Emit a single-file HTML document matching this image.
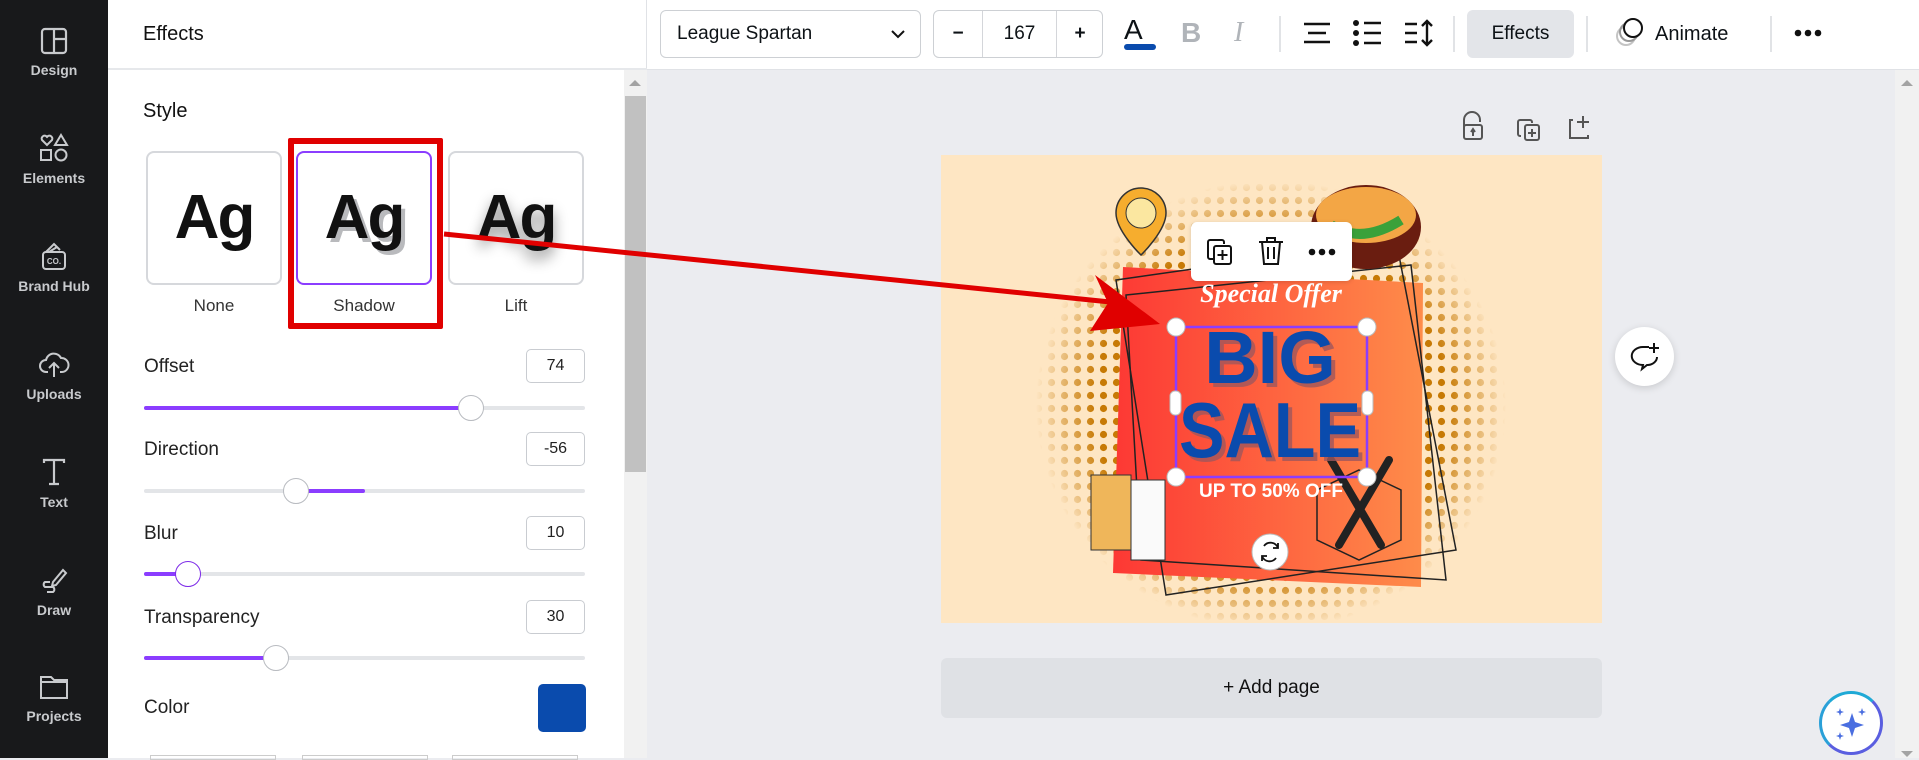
<!DOCTYPE html>
<html><head><meta charset="utf-8"><style>
*{box-sizing:border-box;margin:0;padding:0}
body{width:1919px;height:758px;overflow:hidden;font-family:"Liberation Sans",sans-serif;background:#ebecf0;position:relative;color:#0d1216}
.abs{position:absolute}
.side{left:0;top:0;width:108px;height:758px;background:#18191b}
.si{position:absolute;left:0;width:108px;text-align:center;color:#c8cacd;font-size:14px;font-weight:bold}
.si svg{display:block;margin:0 auto 6px}
.panel{left:108px;top:0;width:539px;height:758px;background:#fff;border-right:1px solid #e0e2e6}
.lbl{position:absolute;font-size:19px;color:#222}
.inp{position:absolute;left:526px;width:59px;height:34px;border:1px solid #c9ccd1;border-radius:5px;text-align:center;line-height:32px;font-size:16px;color:#222}
.track{position:absolute;left:144px;width:441px;height:4px;background:#e3e5e8;border-radius:2px}
.fill{position:absolute;height:4px;background:#8b3dff;border-radius:2px}
.thumb{position:absolute;width:26px;height:26px;border-radius:50%;background:#fff;border:1.5px solid #b8bbc0;margin:-13px 0 0 -13px}
.card{position:absolute;top:151px;width:136px;height:134px;border:2px solid #d6d8dc;border-radius:8px;background:#fff;text-align:center;font-weight:bold;font-size:62px;line-height:130px;color:#111;letter-spacing:-2px}
.cl{position:absolute;top:296px;font-size:17px;color:#333;width:136px;text-align:center}
.top{left:647px;top:0;width:1272px;height:70px;background:#fff;border-bottom:1px solid #e0e2e6}
.div{position:absolute;top:16px;width:2px;height:36px;background:#e1e3e6}
</style></head><body>

<div class="abs side">
 <div class="si" style="top:26px"><svg width="30" height="30" viewBox="0 0 30 30" fill="none" stroke="#c8cacd" stroke-width="2.2"><rect x="3" y="3" width="24" height="24" rx="3"/><path d="M15 3v24M15 13h12"/></svg>Design</div>
 <div class="si" style="top:132px"><svg width="32" height="32" viewBox="0 0 32 32" fill="none" stroke="#c8cacd" stroke-width="2"><path d="M9 13l-5-5a3 3 0 014-4l1 1 1-1a3 3 0 014 4z"/><path d="M23 3l6 10h-12z"/><rect x="3" y="18" width="10" height="10"/><circle cx="23" cy="23" r="5.5"/></svg>Elements</div>
 <div class="si" style="top:240px"><svg width="30" height="32" viewBox="0 0 30 32" fill="none" stroke="#c8cacd" stroke-width="2"><path d="M7 12l8-8 6 6M10 12l8-5"/><rect x="4" y="12" width="22" height="17" rx="3"/><text x="15" y="24" font-size="8" fill="#c8cacd" stroke="none" text-anchor="middle" font-family="Liberation Sans">CO.</text></svg>Brand Hub</div>
 <div class="si" style="top:348px"><svg width="32" height="32" viewBox="0 0 32 32" fill="none" stroke="#c8cacd" stroke-width="2"><path d="M10 24H8a6 6 0 010-12 8 8 0 0115-2 6 6 0 011 14h-2"/><path d="M16 29V16M11 20l5-5 5 5"/></svg>Uploads</div>
 <div class="si" style="top:456px"><svg width="30" height="32" viewBox="0 0 30 32" fill="none" stroke="#c8cacd" stroke-width="2.2"><path d="M5 7V4h20v3M15 4v24M10 28h10"/></svg>Text</div>
 <div class="si" style="top:564px"><svg width="30" height="32" viewBox="0 0 30 32" fill="none" stroke="#c8cacd" stroke-width="2"><path d="M14 18l10-12 3 3-10 12-4 1z"/><path d="M11 18H6a3 3 0 000 5h8a3 3 0 010 5H8"/></svg>Draw</div>
 <div class="si" style="top:672px"><svg width="32" height="30" viewBox="0 0 32 30" fill="none" stroke="#c8cacd" stroke-width="2"><path d="M3 5h10l3 3h13v18H3z M3 10h26"/></svg>Projects</div>
</div>

<div class="abs panel">
 <div style="position:absolute;left:0;top:0;width:539px;height:70px;border-bottom:2px solid #e6e8eb"></div>
 <div class="lbl" style="left:35px;top:23px;font-size:20px;color:#111">Effects</div>
 <div class="abs" style="left:516px;top:70px;width:23px;height:688px;background:#f1f1f1"></div>
 <div class="abs" style="left:517px;top:96px;width:21px;height:376px;background:#c1c1c1"></div>
 <div class="abs" style="left:521px;top:80px;width:0;height:0;border-left:6px solid transparent;border-right:6px solid transparent;border-bottom:6px solid #a3a3a3"></div>
 <div class="lbl" style="left:35px;top:100px;font-size:20px;color:#111">Style</div>
</div>
<div class="card" style="left:146px">Ag</div>
<div class="card" style="left:296px;border:2px solid #8b3dff;text-shadow:4px 4px 0 #b9babd">Ag</div>
<div class="card" style="left:448px;text-shadow:0 8px 14px rgba(0,0,0,.45)">Ag</div>
<div class="cl" style="left:146px">None</div>
<div class="cl" style="left:296px">Shadow</div>
<div class="cl" style="left:448px">Lift</div>
<div class="abs" style="left:288px;top:138px;width:155px;height:191px;border:6px solid #e00000;border-radius:2px"></div>

<div class="lbl" style="left:144px;top:356px">Offset</div><div class="inp" style="top:349px">74</div>
<div class="track" style="top:406px"><div class="fill" style="left:0;width:326px"></div></div><div class="thumb" style="left:471px;top:408px"></div>
<div class="lbl" style="left:144px;top:439px">Direction</div><div class="inp" style="top:432px">-56</div>
<div class="track" style="top:489px"><div class="fill" style="left:151px;width:70px"></div></div><div class="thumb" style="left:296px;top:491px"></div>
<div class="lbl" style="left:144px;top:523px">Blur</div><div class="inp" style="top:516px">10</div>
<div class="track" style="top:572px"><div class="fill" style="left:0;width:44px"></div></div><div class="thumb" style="left:188px;top:574px;border-color:#7d2ae8"></div>
<div class="lbl" style="left:144px;top:607px">Transparency</div><div class="inp" style="top:600px">30</div>
<div class="track" style="top:656px"><div class="fill" style="left:0;width:132px"></div></div><div class="thumb" style="left:276px;top:658px"></div>
<div class="lbl" style="left:144px;top:697px">Color</div>
<div class="abs" style="left:538px;top:684px;width:48px;height:48px;background:#0a4bad;border-radius:5px"></div>
<div class="abs" style="left:150px;top:755px;width:126px;height:5px;border:1px solid #ccc"></div>
<div class="abs" style="left:302px;top:755px;width:126px;height:5px;border:1px solid #ccc"></div>
<div class="abs" style="left:452px;top:755px;width:126px;height:5px;border:1px solid #ccc"></div>

<div class="abs top">
 <div class="abs" style="left:13px;top:10px;width:261px;height:48px;border:1px solid #cdd0d4;border-radius:6px;font-size:19px;line-height:46px;padding-left:16px">League Spartan
  <svg class="abs" style="right:14px;top:17px" width="16" height="12" viewBox="0 0 16 12"><path d="M2 3l6 6 6-6" fill="none" stroke="#111" stroke-width="2"/></svg></div>
 <div class="abs" style="left:286px;top:10px;width:170px;height:48px;border:1px solid #cdd0d4;border-radius:6px;font-size:19px;line-height:46px">
  <span class="abs" style="left:0;width:48px;text-align:center;font-weight:bold">−</span>
  <div class="abs" style="left:48px;top:0;width:1px;height:46px;background:#d4d6da"></div>
  <span class="abs" style="left:49px;width:73px;text-align:center">167</span>
  <div class="abs" style="left:122px;top:0;width:1px;height:46px;background:#d4d6da"></div>
  <span class="abs" style="left:123px;width:46px;text-align:center;font-weight:bold">+</span></div>
 <div class="abs" style="left:477px;top:14px;font-size:28px;">A</div>
 <div class="abs" style="left:477px;top:44px;width:32px;height:6px;background:#0a4bad;border-radius:3px"></div>
 <div class="abs" style="left:534px;top:17px;font-size:28px;font-weight:bold;color:#b0b4b9">B</div>
 <div class="abs" style="left:587px;top:17px;font-size:28px;font-style:italic;color:#b0b4b9;font-family:'Liberation Serif'">I</div>
 <div class="div" style="left:632px"></div>
 <svg class="abs" style="left:655px;top:21px" width="30" height="24" viewBox="0 0 30 24" stroke="#111" stroke-width="2.4"><path d="M2 3h26M6 12h18M2 21h26"/></svg>
 <svg class="abs" style="left:705px;top:20px" width="30" height="26" viewBox="0 0 30 26"><g fill="#111"><circle cx="4" cy="3" r="3"/><circle cx="4" cy="13" r="3"/><circle cx="4" cy="23" r="3"/></g><path d="M12 3h17M12 13h17M12 23h17" stroke="#111" stroke-width="2.4"/></svg>
 <svg class="abs" style="left:756px;top:18px" width="32" height="30" viewBox="0 0 32 30" stroke="#111" stroke-width="2.4" fill="none"><path d="M2 6h12M2 15h12M2 24h12M24 3v24M19 8l5-5 5 5M19 22l5 5 5-5"/></svg>
 <div class="div" style="left:806px"></div>
 <div class="abs" style="left:820px;top:10px;width:107px;height:48px;background:#e3e5e9;border-radius:6px;font-size:19px;line-height:48px;text-align:center">Effects</div>
 <div class="div" style="left:939px"></div>
 <svg class="abs" style="left:967px;top:16px" width="34" height="34" viewBox="0 0 34 34" fill="none" stroke-width="2"><circle cx="12" cy="20" r="9" stroke="#c4c4c4"/><circle cx="15" cy="16" r="9" stroke="#999"/><circle cx="19" cy="12" r="9" stroke="#111" fill="#fff"/></svg>
 <div class="abs" style="left:1008px;top:23px;font-size:20px">Animate</div>
 <div class="div" style="left:1123px"></div>
 <svg class="abs" style="left:1147px;top:29px" width="28" height="8"><g fill="#111"><circle cx="4" cy="4" r="3.3"/><circle cx="14" cy="4" r="3.3"/><circle cx="24" cy="4" r="3.3"/></g></svg>
</div>

<div class="abs" style="left:1895px;top:70px;width:24px;height:688px;background:#f1f1f1"></div>
<div class="abs" style="left:1901px;top:80px;border-left:6px solid transparent;border-right:6px solid transparent;border-bottom:6px solid #a3a3a3"></div>
<div class="abs" style="left:1901px;top:751px;border-left:6px solid transparent;border-right:6px solid transparent;border-top:6px solid #a3a3a3"></div>

<svg class="abs" style="left:1460px;top:110px" width="140" height="32" viewBox="0 0 140 32" fill="none" stroke="#555" stroke-width="2"><path d="M4 18V10a8 8 0 0116 0v2"/><rect x="4" y="15" width="18" height="14" rx="2"/><path d="M13 26v-6M11 22l2-3 2 3"/><rect x="65" y="15" width="14" height="15" rx="2"/><path d="M61 26h-1a2 2 0 01-2-2V12a2 2 0 012-2h10a2 2 0 012 2v1M72 19v8M68 23h8"/><path d="M113 10h-3v18h18v-3M123 6v12M117 12h12"/></svg>

<div class="abs" style="left:941px;top:155px;width:661px;height:468px;background:#fee6c3;overflow:hidden">
<svg width="661" height="468" viewBox="0 0 661 468">
 <defs>
  <pattern id="dp" width="13" height="13" patternUnits="userSpaceOnUse"><circle cx="6.5" cy="6.5" r="3.6" fill="#c77a05"/></pattern>
  <radialGradient id="rg"><stop offset="0.75" stop-color="#fff"/><stop offset="1" stop-color="#000"/></radialGradient>
  <mask id="mk"><ellipse cx="330" cy="250" rx="235" ry="225" fill="url(#rg)"/></mask>
  <linearGradient id="og" x1="0" x2="1"><stop offset="0" stop-color="#fd3834"/><stop offset="1" stop-color="#fe8c4a"/></linearGradient>
 </defs>
 <rect width="661" height="468" fill="url(#dp)" mask="url(#mk)"/>
 <polygon points="182,112 482,128 480,432 172,418" fill="url(#og)"/>
 <g fill="none" stroke="#222" stroke-width="1.5">
  <polygon points="175,125 455,85 515,395 225,440"/>
  <polygon points="185,140 470,110 505,425 200,405"/>
 </g>
 <path d="M175 58a25 25 0 0150 0c0 18-25 42-25 42s-25-24-25-42z" fill="#f6ad2e" stroke="#333" stroke-width="1.5"/>
 <circle cx="200" cy="58" r="15" fill="#fbe7a0" stroke="#333"/>
 <ellipse cx="425" cy="72" rx="55" ry="42" fill="#6a1d10"/>
 <ellipse cx="425" cy="60" rx="50" ry="28" fill="#f3a645"/>
 <path d="M390 70q30 20 70-5" stroke="#3aa13a" stroke-width="10" fill="none"/>
 <rect x="150" y="320" width="40" height="75" fill="#efb65a" stroke="#333"/>
 <rect x="190" y="325" width="34" height="80" fill="#fafafa" stroke="#333"/>
 <polygon points="418,315 460,335 460,385 418,405 376,385 376,335" fill="none" stroke="#222" stroke-width="1.5"/>
 <path d="M390 305l50 85M448 305l-50 85" stroke="#222" stroke-width="8" stroke-linecap="round"/>
 <text x="330" y="147" font-family="Liberation Serif" font-style="italic" font-weight="bold" font-size="26" fill="#fff" text-anchor="middle">Special Offer</text>
 <g font-family="Liberation Sans" font-weight="bold" text-anchor="middle">
  <text x="333" y="232" font-size="74" fill="#a0575c" opacity=".8">BIG</text>
  <text x="329" y="228" font-size="74" fill="#0a4bad">BIG</text>
  <text x="333" y="306" font-size="78" fill="#a0575c" opacity=".8" textLength="182" lengthAdjust="spacingAndGlyphs">SALE</text>
  <text x="329" y="302" font-size="78" fill="#0a4bad" textLength="182" lengthAdjust="spacingAndGlyphs">SALE</text>
  <text x="330" y="342" font-size="19" fill="#fff">UP TO 50% OFF</text>
 </g>
 <rect x="235" y="172" width="191" height="150" fill="none" stroke="#8b3dff" stroke-width="2.5"/>
 <g fill="#fff" stroke="#bbb"><circle cx="235" cy="172" r="9"/><circle cx="426" cy="172" r="9"/><circle cx="235" cy="322" r="9"/><circle cx="426" cy="322" r="9"/>
 <rect x="229" y="236" width="11" height="24" rx="5"/><rect x="421" y="236" width="11" height="24" rx="5"/>
 <circle cx="329" cy="397" r="18"/></g>
 <path d="M323 391a8 8 0 0114 2M335 403a8 8 0 01-14-2M337 388v5h-5M321 406v-5h5" fill="none" stroke="#111" stroke-width="1.8"/>
</svg>
</div>

<div class="abs" style="left:1191px;top:222px;width:161px;height:59px;background:#fff;border-radius:6px;box-shadow:0 1px 4px rgba(0,0,0,.15)">
 <svg class="abs" style="left:14px;top:15px" width="30" height="30" viewBox="0 0 30 30" fill="none" stroke="#111" stroke-width="2"><path d="M8 22H5a2 2 0 01-2-2V5a2 2 0 012-2h12a2 2 0 012 2v2"/><rect x="9" y="9" width="17" height="18" rx="2"/><path d="M17.5 13v10M12.5 18h10"/></svg>
 <svg class="abs" style="left:66px;top:13px" width="28" height="32" viewBox="0 0 28 32" fill="none" stroke="#111" stroke-width="2"><path d="M2 7h24M10 7V3h8v4M5 7l2 22h14l2-22M11 12v12M17 12v12"/></svg>
 <svg class="abs" style="left:117px;top:26px" width="30" height="8"><g fill="#111"><circle cx="4" cy="4" r="3.3"/><circle cx="14" cy="4" r="3.3"/><circle cx="24" cy="4" r="3.3"/></g></svg>
</div>

<svg class="abs" style="left:440px;top:225px" width="730" height="115" viewBox="0 0 730 115"><path d="M4 9L680 78" stroke="#e00000" stroke-width="5"/><polygon points="720,99 655,50 668,78 650,106" fill="#e00000"/></svg>

<div class="abs" style="left:941px;top:658px;width:661px;height:60px;background:#dfe1e5;border-radius:6px;text-align:center;line-height:60px;font-size:19px;color:#111">+ Add page</div>

<div class="abs" style="left:1615px;top:327px;width:59px;height:59px;border-radius:50%;background:#fff;box-shadow:0 2px 8px rgba(0,0,0,.15)">
 <svg class="abs" style="left:15px;top:14px" width="32" height="32" viewBox="0 0 32 32" fill="none" stroke="#111" stroke-width="2"><path d="M19 6h-6a10 8 0 000 18l-1 4 5-4h1a10 8 0 009-8"/><path d="M24 2v10M19 7h10"/></svg>
</div>
<div class="abs" style="left:1819px;top:691px;width:64px;height:64px;border-radius:50%;background:#fff;border:3px solid #5a5ee0;border-top-color:#1fa9d6;border-left-color:#2aa0d8">
 <svg class="abs" style="left:13px;top:13px" width="34" height="34" viewBox="0 0 34 34" fill="#4a6ee0"><path d="M17 6l3 9 9 3-9 3-3 9-3-9-9-3 9-3z"/><path d="M5 1l1 3 3 1-3 1-1 3-1-3-3-1 3-1zM27 1l1 3 3 1-3 1-1 3-1-3-3-1 3-1zM5 25l1 3 3 1-3 1-1 3-1-3-3-1 3-1z"/></svg>
</div>
</body></html>
